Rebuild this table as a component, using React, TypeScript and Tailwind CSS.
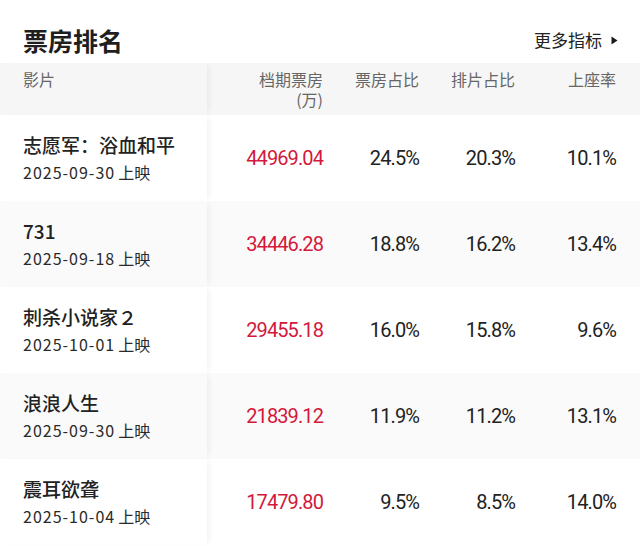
const movies = [
  { name: "志愿军：浴血和平", date: "2025-09-30", box: "44969.04", boxRate: "24.5%", showRate: "20.3%", seat: "10.1%" },
  { name: "731", date: "2025-09-18", box: "34446.28", boxRate: "18.8%", showRate: "16.2%", seat: "13.4%" },
  { name: "刺杀小说家２", date: "2025-10-01", box: "29455.18", boxRate: "16.0%", showRate: "15.8%", seat: "9.6%" },
  { name: "浪浪人生", date: "2025-09-30", box: "21839.12", boxRate: "11.9%", showRate: "11.2%", seat: "13.1%" },
  { name: "震耳欲聋", date: "2025-10-04", box: "17479.80", boxRate: "9.5%", showRate: "8.5%", seat: "14.0%" },
];

const cols = "grid grid-cols-[207px_116px_96px_96px_101px] pr-[24px]";
const cjk = "font-['Noto_Sans_CJK_SC',sans-serif]";
const num = "font-['Roboto','Noto_Sans_CJK_SC',sans-serif] text-right text-[20px] tracking-[-0.9px]";

export default function App() {
  return (
    <div className={`w-[640px] h-[546px] overflow-hidden bg-white ${cjk}`}>
      {/* 标题 */}
      <div className="flex h-[63px] items-center justify-between pl-[23px] pr-[22px] pt-[17px]">
        <h1 className="text-[25px] leading-[32px] font-bold text-[#1f1f1f]">票房排名</h1>
        <div className="flex items-center gap-[9px] text-[17px] leading-[32px] text-[#222]">
          <span>更多指标</span>
          <svg width="7" height="9" viewBox="0 0 7 9">
            <path d="M0.5 0.5 L6.5 4.5 L0.5 8.5 Z" fill="#1a1a1a" />
          </svg>
        </div>
      </div>

      {/* 表头 */}
      <div className={`${cols} h-[52px] bg-[#f6f6f6] text-[16px] leading-[20px] text-[#666]`}>
        <div className="relative h-full bg-[#f6f6f6] pl-[23px] pt-[6px] shadow-[5px_0_6px_-3px_rgba(0,0,0,0.06)]">影片</div>
        <div className="flex flex-col items-end pt-[6px]">
          <span>档期票房</span>
          <span>(万)</span>
        </div>
        <div className="pt-[6px] text-right">票房占比</div>
        <div className="pt-[6px] text-right">排片占比</div>
        <div className="pt-[6px] text-right">上座率</div>
      </div>

      {/* 数据行 */}
      {movies.map((m, i) => {
        const bg = i % 2 === 1 ? "bg-[#fafafa]" : "bg-white";
        return (
          <div key={m.name} className={`${cols} h-[86px] items-center ${bg}`}>
            <div className={`relative flex h-full flex-col justify-center pl-[23px] ${bg} shadow-[5px_0_6px_-3px_rgba(0,0,0,0.06)]`}>
              <div className="text-[19px] leading-[26px] font-medium text-[#222]">{m.name}</div>
              <div className="mt-[1px] text-[16px] leading-[26px] text-[#2a2a2a]">
                <span className="tracking-[1px]">{m.date}</span>
                <span className="ml-[3px]">上映</span>
              </div>
            </div>
            <div className={`${num} text-[#d4183b]`}>{m.box}</div>
            <div className={`${num} text-[#222]`}>{m.boxRate}</div>
            <div className={`${num} text-[#222]`}>{m.showRate}</div>
            <div className={`${num} text-[#222]`}>{m.seat}</div>
          </div>
        );
      })}
    </div>
  );
}
